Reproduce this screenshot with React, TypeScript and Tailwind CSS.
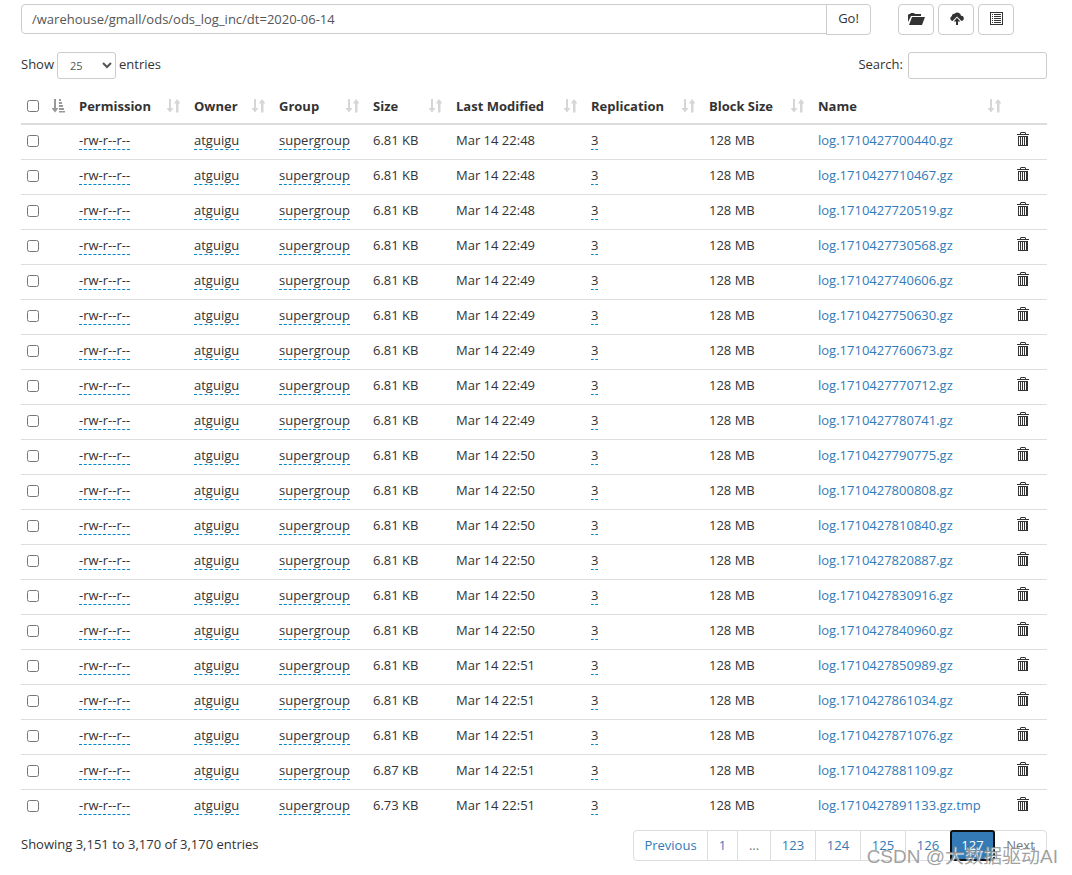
import { useState } from "react";
import clsx from "clsx";

interface LogFile {
  modified: string;
  size: string;
  name: string;
}

const files: LogFile[] = [
  { modified: "Mar 14 22:48", size: "6.81 KB", name: "log.1710427700440.gz" },
  { modified: "Mar 14 22:48", size: "6.81 KB", name: "log.1710427710467.gz" },
  { modified: "Mar 14 22:48", size: "6.81 KB", name: "log.1710427720519.gz" },
  { modified: "Mar 14 22:49", size: "6.81 KB", name: "log.1710427730568.gz" },
  { modified: "Mar 14 22:49", size: "6.81 KB", name: "log.1710427740606.gz" },
  { modified: "Mar 14 22:49", size: "6.81 KB", name: "log.1710427750630.gz" },
  { modified: "Mar 14 22:49", size: "6.81 KB", name: "log.1710427760673.gz" },
  { modified: "Mar 14 22:49", size: "6.81 KB", name: "log.1710427770712.gz" },
  { modified: "Mar 14 22:49", size: "6.81 KB", name: "log.1710427780741.gz" },
  { modified: "Mar 14 22:50", size: "6.81 KB", name: "log.1710427790775.gz" },
  { modified: "Mar 14 22:50", size: "6.81 KB", name: "log.1710427800808.gz" },
  { modified: "Mar 14 22:50", size: "6.81 KB", name: "log.1710427810840.gz" },
  { modified: "Mar 14 22:50", size: "6.81 KB", name: "log.1710427820887.gz" },
  { modified: "Mar 14 22:50", size: "6.81 KB", name: "log.1710427830916.gz" },
  { modified: "Mar 14 22:50", size: "6.81 KB", name: "log.1710427840960.gz" },
  { modified: "Mar 14 22:51", size: "6.81 KB", name: "log.1710427850989.gz" },
  { modified: "Mar 14 22:51", size: "6.81 KB", name: "log.1710427861034.gz" },
  { modified: "Mar 14 22:51", size: "6.81 KB", name: "log.1710427871076.gz" },
  { modified: "Mar 14 22:51", size: "6.87 KB", name: "log.1710427881109.gz" },
  { modified: "Mar 14 22:51", size: "6.73 KB", name: "log.1710427891133.gz.tmp" },
];

// The name column has no width, it takes what is left
const columns = [
  { label: "Permission", width: "w-[115px]" },
  { label: "Owner", width: "w-[85px]" },
  { label: "Group", width: "w-[94px]" },
  { label: "Size", width: "w-[83px]" },
  { label: "Last Modified", width: "w-[135px]" },
  { label: "Replication", width: "w-[118px]" },
  { label: "Block Size", width: "w-[109px]" },
  { label: "Name", width: "" },
];

const pages = [
  { label: "Previous", width: "w-[75px]" },
  { label: "1", width: "w-[31px]" },
  { label: "...", width: "w-[34px]" },
  { label: "123", width: "w-[46px]" },
  { label: "124", width: "w-[46px]" },
  { label: "125", width: "w-[46px]" },
  { label: "126", width: "w-[46px]" },
  { label: "127", width: "w-[45px]" },
  { label: "Next", width: "w-[53px]" },
];

const currentPage = "127";
const disabledPages = ["...", "Next"];

function SortIcon() {
  return (
    <svg viewBox="0 0 13 14" className="h-3.5 w-[13px] shrink-0 fill-[#d6d6d6]">
      <path d="M2 0h2v9h2.500L3 13.500-.5 9H2zM9 13.500h2.500V4.500h2L10 0 6.800 4.500H9z" />
    </svg>
  );
}

function SortedIcon() {
  return (
    <svg viewBox="0 0 13 14" className="h-3.5 w-[13px] shrink-0 fill-[#999]">
      <path d="M2 0h2v9h2.500L3 13.500-.5 9H2zM7 0h2v2H7zM7 3h3v2H7zM7 6h4v2H7zM7 9h5v2H7zM7 12h6v1.500H7z" />
    </svg>
  );
}

function TrashIcon() {
  return (
    <svg viewBox="0 0 12 14" className="h-3.5 w-3 fill-[#333]">
      <path
        fillRule="evenodd"
        d="M4 0h4l1 1v1h3v1H0V2h3V1zM4 1v1h4V1zM1 4h10v10H1zM2 5v8h1V5zM4 5v8h1V5zM6 5v8h1V5zM8 5v8h1V5z"
      />
    </svg>
  );
}

function FolderIcon() {
  return (
    <svg viewBox="0 0 17 12" className="h-3 w-[17px] fill-[#333]">
      <path d="M0 9V2l1-1h1l1-1h3l1 1h6v2H3zM4 4h13l-3 8H1z" />
    </svg>
  );
}

function UploadIcon() {
  return (
    <svg viewBox="0 0 14 13" className="h-[13px] w-3.5 fill-[#333]">
      <path d="M2.500 9A2.600 2.600 0 0 1 2 4a2 2 0 0 1 2.600-2.200A3.700 3.700 0 0 1 11 3.800 2.600 2.600 0 0 1 11.500 9L7 4.500z" />
      <path d="M7 5.800l3.300 3.700H8V13H6V9.500H3.700z" />
    </svg>
  );
}

function ListIcon() {
  return (
    <svg viewBox="0 0 13 13" className="h-[13px] w-[13px] fill-[#333]">
      <path
        fillRule="evenodd"
        d="M0 0h13v13H0zM1 1v11h11V1zM2 2h1v1H2zM4 2h7v1H4zM2 4h1v1H2zM4 4h7v1H4zM2 6h1v1H2zM4 6h7v1H4zM2 8h1v1H2zM4 8h7v1H4zM2 10h1v1H2zM4 10h7v1H4z"
      />
    </svg>
  );
}

const iconButton = "flex h-[31px] w-9 items-center justify-center rounded border border-[#ccc] bg-white pb-0.5 pl-px";
const editable = "border-b border-dashed border-[#0088cc]";

export default function App() {
  const [path, setPath] = useState("/warehouse/gmall/ods/ods_log_inc/dt=2020-06-14");
  const [search, setSearch] = useState("");

  return (
    <div className="relative bg-white px-[21px] pt-1 pb-3.5 font-['Open_Sans','Noto_Sans',sans-serif] text-[13px] leading-5 text-[#333]">
      <div className="mr-[37px] flex">
        <input
          type="text"
          aria-label="Directory"
          value={path}
          onChange={(e) => setPath(e.target.value)}
          className="h-[30px] min-w-0 grow rounded-l border border-[#ccc] px-2.5 text-[#555]"
        />
        <button type="button" className="-ml-px h-[31px] w-[45px] rounded-r border border-[#ccc] pb-1">
          Go!
        </button>
        <div className="ml-[27px] flex gap-1">
          <button type="button" aria-label="Create directory" className={iconButton}>
            <FolderIcon />
          </button>
          <button type="button" aria-label="Upload files" className={iconButton}>
            <UploadIcon />
          </button>
          <button type="button" aria-label="Cut and paste" className={iconButton}>
            <ListIcon />
          </button>
        </div>
      </div>

      <div className="mr-1 mt-[17px] flex justify-between">
        <label className="flex gap-[3px]">
          <span className="pt-0.5">Show</span>
          <select
            defaultValue="25"
            className="h-[27px] w-[59px] rounded-[3px] border border-[#ccc] bg-white pl-2 text-[11px] text-[#555]"
          >
            <option>25</option>
            <option>50</option>
            <option>100</option>
          </select>
          <span className="pt-0.5">entries</span>
        </label>
        <label className="flex gap-[5px]">
          <span className="pt-0.5">Search:</span>
          <input
            type="search"
            value={search}
            onChange={(e) => setSearch(e.target.value)}
            className="h-[27px] w-[139px] rounded-[3px] border border-[#ccc] px-2"
          />
        </label>
      </div>

      <div className="mr-1">
        <table className="mt-2 w-full table-fixed border-separate border-spacing-0">
          <thead>
            <tr className="h-[38px] text-left [&_th]:border-b-2 [&_th]:border-[#ddd] [&_th]:pt-0.5">
              <th className="w-[50px] px-1.5">
                <div className="flex items-center justify-between">
                  <input type="checkbox" aria-label="Select all" className="h-3 w-3" />
                  <SortedIcon />
                </div>
              </th>
              {columns.map((col) => (
                <th key={col.label} className={clsx("pl-2 pr-1.5", col.width)}>
                  <div className="flex items-center justify-between whitespace-nowrap">
                    {col.label}
                    <SortIcon />
                  </div>
                </th>
              ))}
              <th className="w-10" aria-label="Delete" />
            </tr>
          </thead>
          <tbody className="whitespace-nowrap [&_td]:border-b [&_td]:border-[#ddd] [&_td]:pb-1 [&_td]:pl-2 [&_tr:last-child>td]:border-b-0">
            {files.map((file) => (
              <tr key={file.name} className="h-[35px] last:h-[33px]">
                <td>
                  <input type="checkbox" aria-label={file.name} className="-ml-0.5 mt-0.5 block h-3 w-3" />
                </td>
                <td>
                  <span className={editable}>-rw-r--r--</span>
                </td>
                <td>
                  <span className={editable}>atguigu</span>
                </td>
                <td>
                  <span className={editable}>supergroup</span>
                </td>
                <td>{file.size}</td>
                <td>{file.modified}</td>
                <td>
                  <span className={editable}>3</span>
                </td>
                <td>128 MB</td>
                <td>
                  <a href="#" className="text-[#337ab7]">
                    {file.name}
                  </a>
                </td>
                <td>
                  <button type="button" aria-label="Delete file" className="mb-0.5 ml-0.5 block">
                    <TrashIcon />
                  </button>
                </td>
              </tr>
            ))}
          </tbody>
        </table>

        <div className="mt-[7px] flex items-start justify-between">
          <p className="pt-1">Showing 3,151 to 3,170 of 3,170 entries</p>
          <nav aria-label="Pages" className="flex">
            {pages.map(({ label, width }) => (
              <a
                key={label}
                href="#"
                className={clsx(
                  "-ml-px flex h-[31px] items-center justify-center border pb-0.5 first:rounded-l last:rounded-r",
                  width,
                  label === currentPage
                    ? "z-10 rounded-[3px] border-2 border-[#101010] bg-[#337ab7] text-white"
                    : "border-[#ddd]",
                  disabledPages.includes(label) && "text-[#777]",
                  label !== currentPage && !disabledPages.includes(label) && "text-[#337ab7]",
                )}
              >
                {label}
              </a>
            ))}
          </nav>
        </div>
      </div>

      <span className="pointer-events-none absolute right-3.5 bottom-2 z-20 font-['Liberation_Sans','Noto_Sans_CJK_SC',sans-serif] text-[19px] text-[#888]/80 [text-shadow:1px_1px_1px_#fff]">
        CSDN @大数据驱动AI
      </span>
    </div>
  );
}
